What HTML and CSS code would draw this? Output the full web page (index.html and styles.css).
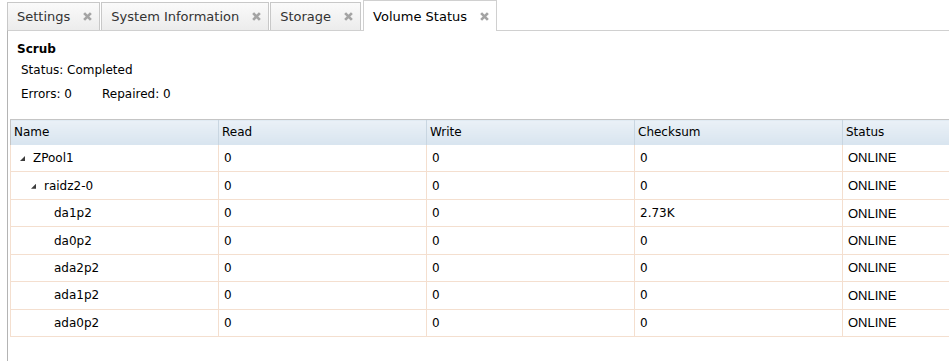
FILE: index.html
```html
<!DOCTYPE html>
<html lang="en">
  <head>
    <meta charset="UTF-8" />
    <title>Volume Status</title>
    <link rel="stylesheet" href="styles.css">
  </head>
  <body>
    <div class="tab-bar">
      <div class="tab">
        <span class="tab-label">Settings</span>
        <svg class="tab-close" viewBox="0 0 8 8"><path d="M1 1L7 7M7 1L1 7" /></svg>
      </div>
      <div class="tab">
        <span class="tab-label">System Information</span>
        <svg class="tab-close" viewBox="0 0 8 8"><path d="M1 1L7 7M7 1L1 7" /></svg>
      </div>
      <div class="tab">
        <span class="tab-label">Storage</span>
        <svg class="tab-close" viewBox="0 0 8 8"><path d="M1 1L7 7M7 1L1 7" /></svg>
      </div>
      <div class="tab active">
        <span class="tab-label">Volume Status</span>
        <svg class="tab-close" viewBox="0 0 8 8"><path d="M1 1L7 7M7 1L1 7" /></svg>
      </div>
    </div>

    <div class="panel">
      <div class="scrub">
        <div class="scrub-title">Scrub</div>
        <div class="scrub-line">Status: Completed</div>
        <div class="scrub-line counts">
          <span>Errors: 0</span>
          <span>Repaired: 0</span>
        </div>
      </div>

      <table class="grid">
        <thead>
          <tr>
            <th>Name</th>
            <th>Read</th>
            <th>Write</th>
            <th>Checksum</th>
            <th>Status</th>
          </tr>
        </thead>
        <tbody>
          <tr>
            <td class="name level-0"><span class="expander"></span>ZPool1</td>
            <td>0</td><td>0</td><td>0</td><td class="status">ONLINE</td>
          </tr>
          <tr>
            <td class="name level-1"><span class="expander"></span>raidz2-0</td>
            <td>0</td><td>0</td><td>0</td><td class="status">ONLINE</td>
          </tr>
          <tr>
            <td class="name level-2">da1p2</td>
            <td>0</td><td>0</td><td>2.73K</td><td class="status">ONLINE</td>
          </tr>
          <tr>
            <td class="name level-2">da0p2</td>
            <td>0</td><td>0</td><td>0</td><td class="status">ONLINE</td>
          </tr>
          <tr>
            <td class="name level-2">ada2p2</td>
            <td>0</td><td>0</td><td>0</td><td class="status">ONLINE</td>
          </tr>
          <tr>
            <td class="name level-2">ada1p2</td>
            <td>0</td><td>0</td><td>0</td><td class="status">ONLINE</td>
          </tr>
          <tr>
            <td class="name level-2">ada0p2</td>
            <td>0</td><td>0</td><td>0</td><td class="status">ONLINE</td>
          </tr>
        </tbody>
      </table>
    </div>
  </body>
</html>
```

FILE: styles.css
```css
* {
    box-sizing: border-box;
}

html,
body {
    margin: 0;
    height: 100%;
    overflow: hidden;
    background: #fff;
}

body {
    font-family: "DejaVu Sans", Verdana, sans-serif;
    font-size: 12px;
    color: #000;
}

.tab-bar {
    display: flex;
    align-items: flex-end;
    height: 30px;
    padding-left: 7px;
}

.tab {
    display: flex;
    align-items: center;
    height: 28px;
    margin-right: 1px;
    padding: 0 7px 0 9px;
    border: 1px solid #c8c8c8;
    border-bottom: none;
    background: linear-gradient(#fafafa, #ececec);
    font-size: 13px;
    color: #333;
}

.tab.active {
    height: 31px;
    margin-left: 1px;
    margin-bottom: -1px;
    background: #fff;
    color: #000;
    position: relative;
    border-color: #d0d0d0;
}

.tab-label {
    margin-right: 13px;
}

.tab-close {
    width: 9px;
    height: 9px;
    fill: none;
    stroke: #a4a4a4;
    stroke-width: 2.4;
}

.panel {
    height: calc(100% - 30px);
    border-top: 1px solid #d0d0d0;
    border-left: 1px solid #b4b4b4;
    margin-left: 7px;
    overflow: hidden;
}

.scrub {
    padding: 10px 0 0 9px;
}

.scrub-title {
    font-weight: bold;
    line-height: 16px;
}

.scrub-line {
    line-height: 16px;
    margin-top: 5px;
    padding-left: 4px;
}

.scrub-line.counts {
    display: flex;
    gap: 30px;
    margin-top: 8px;
}

.grid {
    margin: 17px 0 0 2px;
    border-collapse: collapse;
    table-layout: fixed;
    width: 1040px;
}

.grid th {
    width: 208px;
    height: 25px;
    padding: 0 3px;
    text-align: left;
    font-weight: normal;
    border-top: 1px solid #c5c5c5;
    border-left: 1px solid #c9d6e1;
    background: linear-gradient(#eaf1f7, #d8e4ef);
}

.grid th:first-child {
    border-left: 1px solid #c5c5c5;
}

.grid td {
    height: 27.45px;
    padding: 0 5px;
    border: 1px solid #f4dfcf;
    border-top: none;
    white-space: nowrap;
}

.grid td.status {
    font-family: "Liberation Sans", Arial, sans-serif;
    font-size: 13px;
}

.grid td.level-0 {
    padding-left: 9px;
}

.grid td.level-1 {
    padding-left: 20px;
}

.grid td.level-2 {
    padding-left: 43px;
}

.expander {
    display: inline-block;
    width: 5px;
    height: 5px;
    margin-right: 8px;
    vertical-align: 1px;
    background: #3c3c3c;
    clip-path: polygon(100% 0, 100% 100%, 0 100%);
}
```
